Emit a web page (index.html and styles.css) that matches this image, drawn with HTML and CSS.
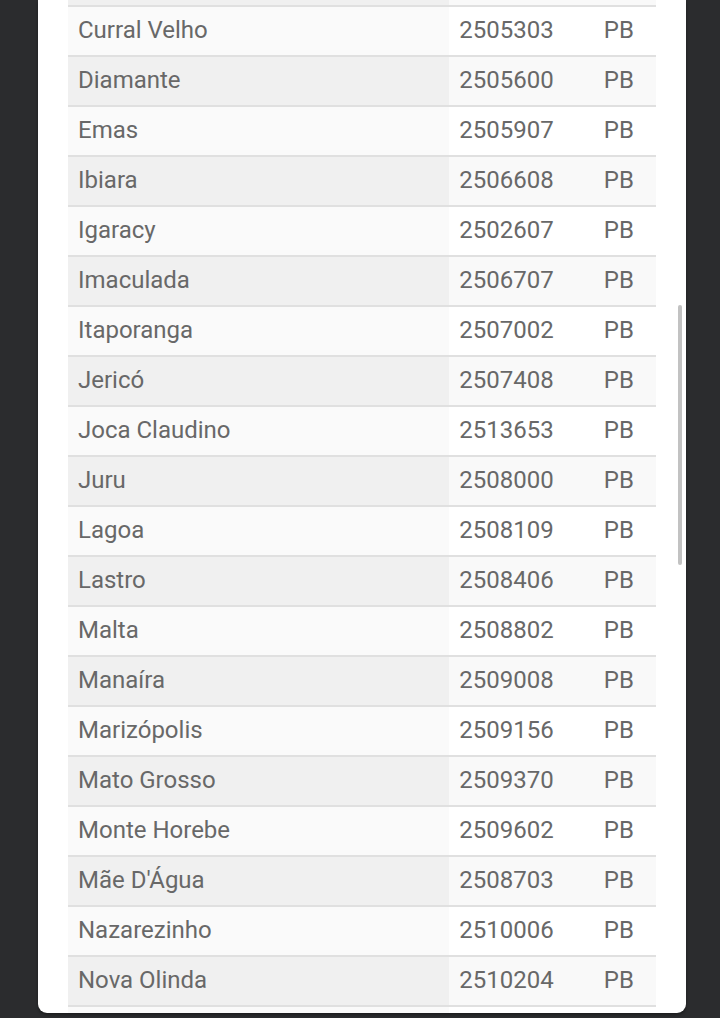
FILE: index.html
```html
<!DOCTYPE html>
<html lang="pt-BR">
<head>
<meta charset="utf-8">
<title>Municípios</title>
<link rel="stylesheet" href="styles.css">
</head>
<body>
<div class="card">
  <div class="scroll">
    <table class="grid">
      <tbody>
        <tr class="odd"><td class="c1"></td><td class="c2"></td><td class="c3"></td></tr>
        <tr class="even"><td class="c1">Curral Velho</td><td class="c2">2505303</td><td class="c3">PB</td></tr>
        <tr class="odd"><td class="c1">Diamante</td><td class="c2">2505600</td><td class="c3">PB</td></tr>
        <tr class="even"><td class="c1">Emas</td><td class="c2">2505907</td><td class="c3">PB</td></tr>
        <tr class="odd"><td class="c1">Ibiara</td><td class="c2">2506608</td><td class="c3">PB</td></tr>
        <tr class="even"><td class="c1">Igaracy</td><td class="c2">2502607</td><td class="c3">PB</td></tr>
        <tr class="odd"><td class="c1">Imaculada</td><td class="c2">2506707</td><td class="c3">PB</td></tr>
        <tr class="even"><td class="c1">Itaporanga</td><td class="c2">2507002</td><td class="c3">PB</td></tr>
        <tr class="odd"><td class="c1">Jericó</td><td class="c2">2507408</td><td class="c3">PB</td></tr>
        <tr class="even"><td class="c1">Joca Claudino</td><td class="c2">2513653</td><td class="c3">PB</td></tr>
        <tr class="odd"><td class="c1">Juru</td><td class="c2">2508000</td><td class="c3">PB</td></tr>
        <tr class="even"><td class="c1">Lagoa</td><td class="c2">2508109</td><td class="c3">PB</td></tr>
        <tr class="odd"><td class="c1">Lastro</td><td class="c2">2508406</td><td class="c3">PB</td></tr>
        <tr class="even"><td class="c1">Malta</td><td class="c2">2508802</td><td class="c3">PB</td></tr>
        <tr class="odd"><td class="c1">Manaíra</td><td class="c2">2509008</td><td class="c3">PB</td></tr>
        <tr class="even"><td class="c1">Marizópolis</td><td class="c2">2509156</td><td class="c3">PB</td></tr>
        <tr class="odd"><td class="c1">Mato Grosso</td><td class="c2">2509370</td><td class="c3">PB</td></tr>
        <tr class="even"><td class="c1">Monte Horebe</td><td class="c2">2509602</td><td class="c3">PB</td></tr>
        <tr class="odd"><td class="c1">Mãe D'Água</td><td class="c2">2508703</td><td class="c3">PB</td></tr>
        <tr class="even"><td class="c1">Nazarezinho</td><td class="c2">2510006</td><td class="c3">PB</td></tr>
        <tr class="odd"><td class="c1">Nova Olinda</td><td class="c2">2510204</td><td class="c3">PB</td></tr>
        <tr class="even"><td class="c1"></td><td class="c2"></td><td class="c3"></td></tr>
      </tbody>
    </table>
  </div>
  <div class="scrollbar"></div>
</div>
</body>
</html>
```
FILE: styles.css
```css
html, body {
  margin: 0;
  padding: 0;
  background: #2b2c2e;
  height: 1018px;
  overflow: hidden;
}
body {
  font-family: Roboto, "Liberation Sans", sans-serif;
}
.card {
  position: relative;
  margin-left: 38px;
  width: 648px;
  height: 1013px;
  background: #ffffff;
  border-radius: 0 0 9px 9px;
  box-shadow: 0 2px 3px rgba(0, 0, 0, 0.35);
  overflow: hidden;
}
.scroll {
  padding: 0 30px;
}
.grid {
  width: 588px;
  margin-top: -45px;
  border-collapse: collapse;
  table-layout: fixed;
}
.grid td {
  height: 46px;
  padding: 0 0 2px 10px;
  border-top: 2px solid #e0e0e0;
  font-size: 24px;
  color: #686868;
  white-space: nowrap;
  vertical-align: middle;
}
.grid .c1 { width: 370px; }
.grid .c2 { width: 134px; }
.grid .c3 { width: 52px; }
.grid tr.even td { background: #ffffff; }
.grid tr.even td.c1 { background: #fafafa; }
.grid tr.odd td { background: #f9f9f9; }
.grid tr.odd td.c1 { background: #f0f0f0; }
.scrollbar {
  position: absolute;
  right: 4px;
  top: 305px;
  width: 4px;
  height: 260px;
  border-radius: 2px;
  background: #c2c2c2;
}
```
